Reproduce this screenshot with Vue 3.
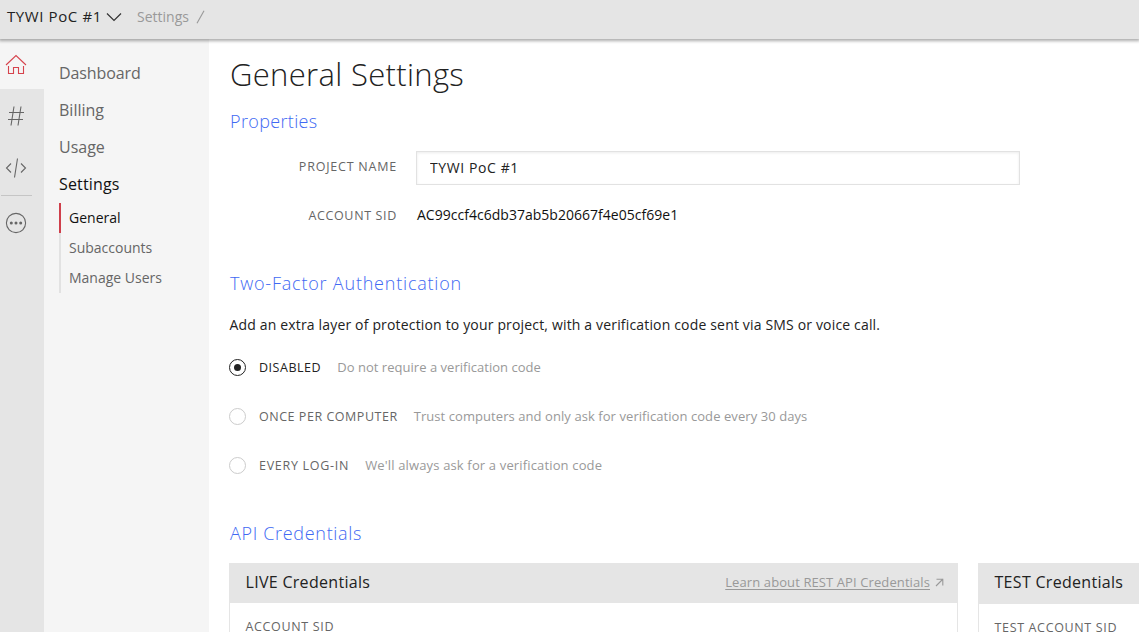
<script setup>
import { ref } from 'vue'

const menu = [
  { label: 'Dashboard', cls: 'dash' },
  { label: 'Billing', cls: '' },
  { label: 'Usage', cls: '' },
  { label: 'Settings', cls: 'on' },
]
const submenu = ['General', 'Subaccounts', 'Manage Users']
const projectName = ref('TYWI PoC #1')
const selected = ref('disabled')
const options = [
  { id: 'disabled', label: 'DISABLED', hint: 'Do not require a verification code' },
  { id: 'once', label: 'ONCE PER COMPUTER', hint: 'Trust computers and only ask for verification code every 30 days' },
  { id: 'every', label: 'EVERY LOG-IN', hint: "We'll always ask for a verification code" },
]
</script>

<template>
  <div class="page">
    <header class="topbar">
      <span class="project">TYWI PoC #1</span>
      <svg class="chevron" width="16" height="10" viewBox="0 0 16 10"><path d="M1 1.5 L8 8.5 L15 1.5" /></svg>
      <span class="crumb">Settings</span>
      <svg class="slash" width="9" height="14" viewBox="0 0 9 14"><path d="M8 .8 L1 13.2" /></svg>
    </header>
    <div class="body">
      <nav class="rail">
        <a class="tile home">
          <svg width="22" height="22" viewBox="0 0 22 22"><path d="M1 11 L11 1.5 L21 11 M3.5 12 V19.5 H8.5 V13.5 H13.5 V19.5 H18.5 V12" /></svg>
        </a>
        <a class="tile hash">
          <svg width="18" height="22" viewBox="0 0 18 22"><path d="M7 1.5 L4 20.5 M14 1.5 L11 20.5 M2 7.5 H17 M1 14.5 H16" /></svg>
        </a>
        <a class="tile code">
          <svg width="22" height="22" viewBox="0 0 22 22"><path d="M6 6.5 L1.5 11 L6 15.5 M16 6.5 L20.5 11 L16 15.5 M12.5 1.5 L9.5 20.5" /></svg>
        </a>
        <div class="rule"></div>
        <a class="tile more">
          <svg width="22" height="22" viewBox="0 0 22 22"><circle cx="11" cy="11" r="9.6" /><g class="dots"><circle cx="6.3" cy="11" r="1.5" /><circle cx="11" cy="11" r="1.5" /><circle cx="15.7" cy="11" r="1.5" /></g></svg>
        </a>
      </nav>
      <aside class="side">
        <a v-for="m in menu" :key="m.label" class="item" :class="m.cls">{{ m.label }}</a>
        <div class="sub">
          <a v-for="(s, i) in submenu" :key="s" class="subitem" :class="{ active: i === 0 }">{{ s }}</a>
        </div>
      </aside>
      <main class="main">
        <h1>General Settings</h1>
        <h2 class="props">Properties</h2>
        <div class="field">
          <label class="caps name">PROJECT NAME</label>
          <input v-model="projectName" class="input" type="text" />
        </div>
        <div class="field sidrow">
          <label class="caps">ACCOUNT SID</label>
          <span class="sid">AC99ccf4c6db37ab5b20667f4e05cf69e1</span>
        </div>
        <h2 class="auth">Two-Factor Authentication</h2>
        <p class="intro">Add an extra layer of protection to your project, with a verification code sent via SMS or voice call.</p>
        <div v-for="o in options" :key="o.id" class="option" :class="[o.id, { checked: selected === o.id }]" @click="selected = o.id">
          <span class="radio"></span>
          <span class="optlabel">{{ o.label }}</span>
          <span class="hint">{{ o.hint }}</span>
        </div>
        <h2 class="api">API Credentials</h2>
        <div class="cards">
          <section class="card live">
            <div class="cardhead">
              <h3>LIVE Credentials</h3>
              <a class="learn"><span>Learn about REST API Credentials</span>
                <svg width="9" height="9" viewBox="0 0 9 9"><path d="M1 8 L8 1 M1.5 1.2 H7.8 V7.5" /></svg>
              </a>
            </div>
            <div class="caps cardlabel">ACCOUNT SID</div>
          </section>
          <section class="card test">
            <div class="cardhead"><h3>TEST Credentials</h3></div>
            <div class="caps cardlabel">TEST ACCOUNT SID</div>
          </section>
        </div>
      </main>
    </div>
  </div>
</template>

<style>
body { margin: 0; overflow: hidden; }
</style>
<style scoped>
* { box-sizing: border-box; }
.page { width: 1139px; height: 632px; overflow: hidden; background: #fff; font-family: "Open Sans", "Noto Sans", sans-serif; color: #222; display: flex; flex-direction: column; }
svg { fill: none; stroke: currentColor; stroke-width: 1.1; display: block; flex: none; }
.topbar { height: 39px; flex: none; background: #e5e5e5; display: flex; align-items: center; padding: 0 0 6px 7px; position: relative; z-index: 2; box-shadow: 0 1px 3px 1px rgba(0,0,0,.33); }
.project { font-size: 15px; letter-spacing: .6px; line-height: 20px; width: 99px; white-space: nowrap; padding-bottom: 1px; }
.chevron { stroke-width: 1.2; color: #333; }
.crumb { font-size: 14px; color: #999; margin-left: 15px; width: 59px; }
.slash { color: #999; }
.body { display: flex; flex: 1; min-height: 0; }
.rail { width: 44px; flex: none; background: #e5e5e5; color: #666; }
.tile { display: flex; align-items: center; height: 52px; padding-left: 5px; }
.home { height: 50px; background: #f5f5f5; color: #d6434d; padding-top: 2px; }
.hash { height: 54px; padding-left: 7px; }
.code { padding-bottom: 2px; }
.rule { width: 31px; height: 1px; background: #c5c5c5; margin-left: 1px; }
.more { height: 54px; }
.dots { fill: currentColor; stroke: none; }
.side { width: 165px; flex: none; background: #f5f5f5; padding: 16px 0 0 15px; color: #666; }
.item { display: block; height: 37px; line-height: 37px; font-size: 16px; }
.dash { letter-spacing: -.1px; }
.on { color: #111; letter-spacing: .15px; }
.sub { border-left: 2px solid #e2e2e2; height: 90px; }
.subitem { display: block; font-size: 14px; height: 30px; line-height: 29px; padding-left: 8px; margin-left: -2px; border-left: 2px solid transparent; }
.active { border-left-color: #cf3f4b; color: #111; }
.main { flex: none; width: 930px; padding: 11px 0 0 20px; }
h1, h2, h3, p { margin: 0; }
h1 { font-size: 31px; font-weight: 300; line-height: 48px; letter-spacing: .33px; padding-left: 1px; }
h2 { font-size: 18px; font-weight: 300; line-height: 24px; color: #4169f3; padding-left: 1px; }
.props { margin-top: 11px; letter-spacing: .35px; }
.field { display: flex; align-items: center; }
.caps { font-size: 12.5px; letter-spacing: .65px; color: #666; }
.field .caps { width: 168px; text-align: right; margin-right: 19px; }
.field .name { letter-spacing: .78px; padding-bottom: 4px; }
.input { width: 604px; height: 34px; border: 1px solid #e2e2e2; box-shadow: inset 0 1px 3px rgba(0,0,0,.08); padding: 0 13px 2px; font: 14px "Open Sans", sans-serif; letter-spacing: .6px; color: #222; outline: none; }
.props + .field { margin-top: 18px; }
.sidrow { margin-top: 20px; height: 20px; }
.sid { font-size: 14px; color: #111; padding: 0 0 2px 1px; letter-spacing: .02px; }
.auth { margin-top: 46px; letter-spacing: .79px; }
.intro { margin-top: 19px; font-size: 14px; line-height: 22px; letter-spacing: .165px; white-space: nowrap; padding-left: .5px; }
.option { display: flex; align-items: center; height: 20px; margin-top: 29px; white-space: nowrap; color: #666; }
.intro + .option { margin-top: 21px; }
.radio { width: 17px; height: 17px; border: 1px solid #ccc; border-radius: 50%; margin-right: 13px; display: flex; align-items: center; justify-content: center; }
.checked { color: #222; }
.checked .radio { border-color: #222; }
.checked .radio::after { content: ""; width: 7px; height: 7px; border-radius: 50%; background: #222; }
.optlabel { font-size: 12.5px; letter-spacing: .53px; margin-right: 16px; }
.every .optlabel { letter-spacing: .72px; }
.hint { font-size: 13px; color: #999; letter-spacing: .07px; }
.disabled .hint { letter-spacing: .03px; }
.every .hint { letter-spacing: .15px; }
.api { margin-top: 46px; letter-spacing: .68px; }
.cards { display: flex; gap: 20px; margin-top: 18px; }
.card { width: 729px; flex: none; border: 1px solid #e5e5e5; height: 200px; }
.cardhead { height: 39px; background: #e5e5e5; display: flex; align-items: center; justify-content: space-between; padding: 0 13px 3px 15.5px; }
.test .cardhead { height: 40px; padding-bottom: 4px; }
h3 { font-size: 16px; font-weight: 400; letter-spacing: .3px; }
.learn { display: flex; align-items: center; gap: 5px; color: #999; font-size: 13px; letter-spacing: .1px; }
.learn span { text-decoration: underline; text-underline-offset: 2px; }
.cardlabel { padding: 15px 0 0 15.5px; line-height: 17px; }
</style>
